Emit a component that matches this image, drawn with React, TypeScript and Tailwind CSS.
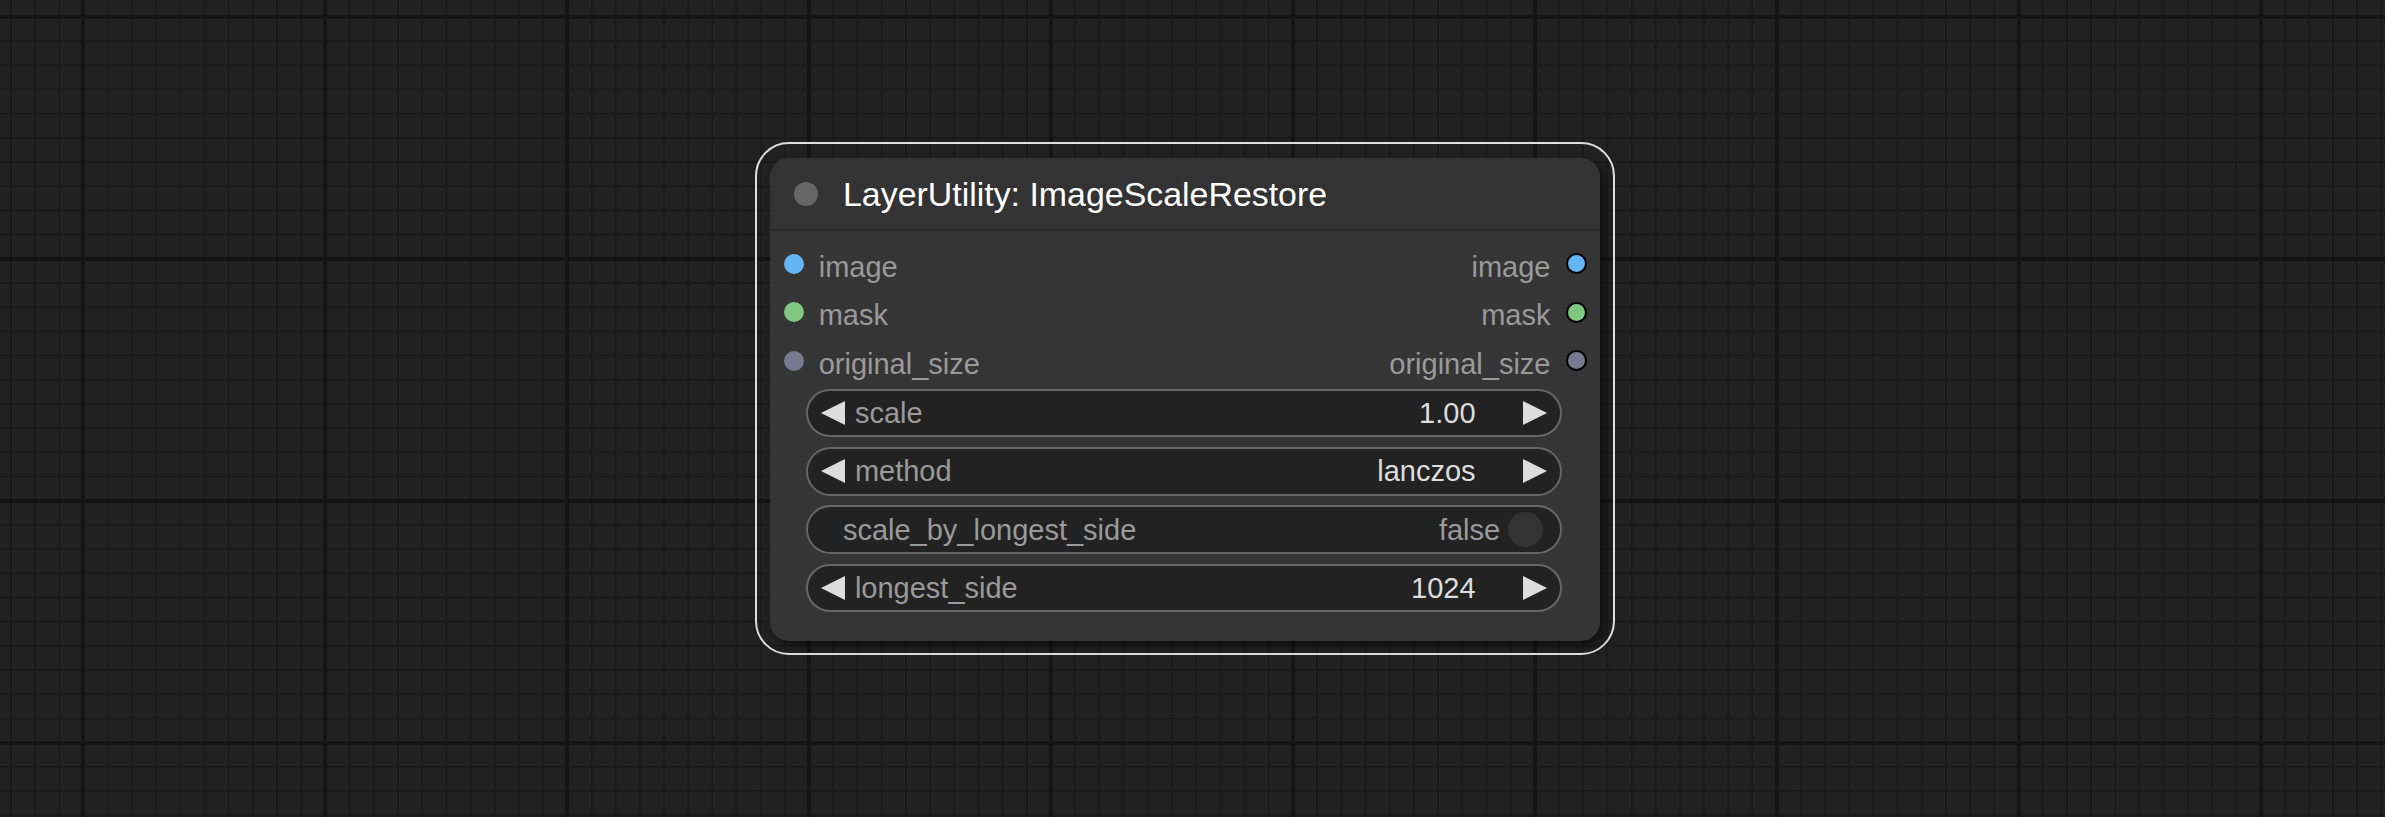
import React from "react";

const FONT = "font-['Liberation_Sans',Arial,sans-serif]";

function LeftArrow() {
  return (
    <svg width="24" height="24" viewBox="0 0 24 24" className="shrink-0">
      <polygon points="24,0 0,12 24,24" fill="#dddddd" />
    </svg>
  );
}

function RightArrow() {
  return (
    <svg width="24" height="24" viewBox="0 0 24 24" className="shrink-0">
      <polygon points="0,0 24,12 0,24" fill="#dddddd" />
    </svg>
  );
}

function SlotRow({
  left,
  right,
  color,
}: {
  left: string;
  right: string;
  color: string;
}) {
  return (
    <div className="h-[48.4px] flex items-center justify-between pl-[14px] pr-[13.5px]">
      <div className="flex items-center">
        <span className={`w-[20px] h-[20px] rounded-full ${color}`} />
        <span className="ml-[14.7px] text-[29px] leading-[44px] text-[#9a9a9a] relative top-[3px]">
          {left}
        </span>
      </div>
      <div className="flex items-center">
        <span className="mr-[15px] text-[29px] leading-[44px] text-[#9a9a9a] relative top-[3px]">
          {right}
        </span>
        <span className={`w-[21px] h-[21px] rounded-full border-2 border-black ${color}`} />
      </div>
    </div>
  );
}

function NumberWidget({ label, value }: { label: string; value: string }) {
  return (
    <div className="h-[48.4px] rounded-full border-2 border-[#666666] bg-[#222222] flex items-center pl-[13.4px] pr-[12.6px]">
      <LeftArrow />
      <span className="ml-[10px] flex-1 text-[29px] leading-[44px] text-[#9a9a9a]">{label}</span>
      <span className="text-[29px] leading-[44px] text-[#dddddd]">{value}</span>
      <span className="w-[47.4px]" />
      <RightArrow />
    </div>
  );
}

function ToggleWidget({ label, value }: { label: string; value: string }) {
  return (
    <div className="h-[48.4px] rounded-full border-2 border-[#666666] bg-[#222222] flex items-center pl-[35.4px] pr-[16.8px]">
      <span className="flex-1 text-[29px] leading-[44px] text-[#9a9a9a]">{label}</span>
      <span className="text-[29px] leading-[44px] text-[#9a9a9a]">{value}</span>
      <span className="ml-[7.5px] w-[35px] h-[35px] rounded-full bg-[#333333]" />
    </div>
  );
}

export default function App() {
  return (
    <div
      className={`relative w-[2385px] h-[817px] overflow-hidden ${FONT} bg-[#212121] [background-image:linear-gradient(to_right,#141414_0,#141414_4px,transparent_4px),linear-gradient(to_bottom,#141414_0,#141414_4px,transparent_4px),linear-gradient(to_right,#1a1a1a_0,#1a1a1a_2px,transparent_2px),linear-gradient(to_bottom,#1a1a1a_0,#1a1a1a_2px,transparent_2px)] [background-size:242px_242px,242px_242px,24.2px_24.2px,24.2px_24.2px] [background-position:81px_15px,81px_15px,10px_16px,10px_16px]`}
    >
      {/* selected node outline */}
      <div className="absolute left-[755px] top-[142px] w-[860px] h-[513px] rounded-[34px] border-2 border-[#dedede] pl-[13px] pt-[14px]">
        {/* node */}
        <div className="w-[830px] h-[483px] rounded-[19px] bg-[#353535] shadow-[5px_5px_8px_rgba(0,0,0,0.5)] flex flex-col overflow-hidden">
          {/* title */}
          <div className="h-[71px] shrink-0 bg-[#333333] flex items-center pl-[24px]">
            <span className="w-[24px] h-[24px] rounded-full bg-[#666666] shrink-0" />
            <span className="ml-[25px] text-[33.9px] leading-[72px] text-white relative top-[0.5px]">
              LayerUtility: ImageScaleRestore
            </span>
          </div>
          <div className="h-[2px] shrink-0 bg-[#2b2b2b]" />

          {/* slots */}
          <div className="pt-[8.8px] flex flex-col">
            <SlotRow left="image" right="image" color="bg-[#64b5f6]" />
            <SlotRow left="mask" right="mask" color="bg-[#81c784]" />
            <SlotRow left="original_size" right="original_size" color="bg-[#787890]" />
          </div>

          {/* widgets */}
          <div className="mt-[4px] ml-[35.5px] w-[756px] flex flex-col gap-[9.8px]">
            <NumberWidget label="scale" value="1.00" />
            <NumberWidget label="method" value="lanczos" />
            <ToggleWidget label="scale_by_longest_side" value="false" />
            <NumberWidget label="longest_side" value="1024" />
          </div>
        </div>
      </div>
    </div>
  );
}
